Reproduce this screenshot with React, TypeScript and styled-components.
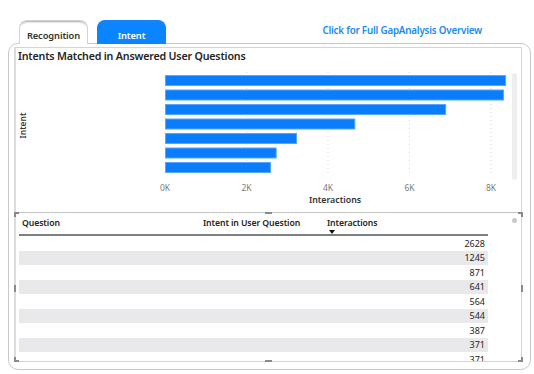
import React from "react";
import styled, { createGlobalStyle } from "styled-components";

const Global = createGlobalStyle`
  html, body { margin: 0; padding: 0; background: #fff; }
  body { font-family: "Noto Sans", "Open Sans", sans-serif; color: #252423; }
  * { box-sizing: border-box; }
`;

const Page = styled.div`
  width: 534px;
  height: 374px;
  overflow: hidden;
  display: flex;
  flex-direction: column;
`;

const TopBar = styled.div`
  height: 43px;
  display: flex;
  align-items: flex-end;
  padding-left: 19px;
  position: relative;
  z-index: 2;
`;

const Tab = styled.div<{ $active?: boolean }>`
  width: 69px;
  height: 24px;
  margin-right: 9px;
  margin-bottom: -1px;
  border-radius: 8px 8px 0 0;
  display: flex;
  align-items: flex-end;
  justify-content: center;
  padding-bottom: 2px;
  font-size: 9.3px;
  font-weight: 600;
  letter-spacing: -0.1px;
  background: ${(p) => (p.$active ? "#0a84ff" : "#fff")};
  color: ${(p) => (p.$active ? "#fff" : "#333")};
  border: 1px solid ${(p) => (p.$active ? "#0a84ff" : "#d2d2d2")};
  border-bottom: none;
  box-shadow: inset 0 3px 2px -2px ${(p) => (p.$active ? "#3a7fc8" : "#a8a8a8")};
`;

const LinkText = styled.a`
  margin-left: auto;
  margin-right: 52px;
  align-self: flex-start;
  margin-top: 24px;
  font-size: 9.8px;
  font-weight: 600;
  color: #1a8bf0;
  text-decoration: none;
  letter-spacing: -0.2px;
`;

const Card = styled.div`
  margin-left: 8px;
  width: 523px;
  height: 327px;
  border: 1px solid #c9c9c9;
  border-radius: 10px;
  padding: 3px 8px 7px 5px;
`;

const Frame = styled.div`
  height: 100%;
  border: 1px solid #d4d4d4;
  border-left: 2px solid #dcdcdc;
  display: flex;
  flex-direction: column;
`;

const ChartSection = styled.div`
  height: 162px;
  display: grid;
  grid-template-columns: 14px 125px 355px 2px 1fr;
  grid-template-rows: 22px 125px 1fr;
`;

const ChartTitle = styled.div`
  grid-column: 1 / -1;
  padding: 1px 0 0 2px;
  font-size: 10.7px;
  font-weight: 600;
  color: #252423;
  letter-spacing: -0.2px;
`;

const YAxisTitle = styled.div`
  grid-column: 1;
  grid-row: 2;
  display: flex;
  align-items: center;
  justify-content: center;
  padding-bottom: 14px;
  & > span {
    transform: rotate(-90deg);
    font-size: 8.5px;
    font-weight: 600;
    color: #333;
    white-space: nowrap;
  }
`;

const Plot = styled.svg`
  grid-column: 3;
  grid-row: 2;
  width: 355px;
  height: 125px;
  display: block;
`;

const ScrollTrack = styled.div`
  grid-column: 5;
  grid-row: 2;
  width: 5px;
  height: 107px;
  margin-top: 3px;
  border-radius: 3px;
  background: #eeeeee;
`;

const XAxisTitle = styled.div`
  grid-column: 3;
  grid-row: 3;
  text-align: center;
  padding-left: 5px;
  font-size: 8.8px;
  font-weight: 600;
  color: #333;
  margin-top: -1px;
`;

const TableVisual = styled.div`
  position: relative;
  margin-top: 2px;
  flex: 1;
  border-top: 1px solid #c4c4c4;
  padding: 2px 0 0 3px;
  overflow: visible;
`;

const TableClip = styled.div`
  width: 469px;
  height: 146px;
  overflow: hidden;
`;

const HeaderRow = styled.div`
  display: grid;
  grid-template-columns: 184px 124px 1fr;
  height: 21px;
  border-bottom: 2px solid #7e7e86;
  font-size: 8.7px;
  font-weight: 600;
  color: #252423;
  padding-top: 2px;
  letter-spacing: -0.1px;
`;

const HeadCell = styled.div<{ $first?: boolean }>`
  padding-left: ${(p) => (p.$first ? 3 : 0)}px;
  position: relative;
`;

const SortCaret = styled.span`
  position: absolute;
  left: 2px;
  top: 13px;
  width: 0;
  height: 0;
  border-left: 3px solid transparent;
  border-right: 3px solid transparent;
  border-top: 4px solid #111;
`;

const Row = styled.div<{ $alt: boolean }>`
  height: 14.5px;
  display: flex;
  align-items: center;
  justify-content: flex-end;
  padding-right: 3px;
  background: ${(p) => (p.$alt ? "#e9e9eb" : "#fff")};
  font-size: 9px;
  color: #252423;
`;

const Handle = styled.div<{ $w: number; $h: number }>`
  position: absolute;
  width: ${(p) => p.$w}px;
  height: ${(p) => p.$h}px;
  background: #8a8a8a;
`;

const Corner = styled.div`
  position: absolute;
  width: 5px;
  height: 5px;
  border-color: #8a8a8a;
  border-style: solid;
  border-width: 0;
`;

const ScrollDot = styled.div`
  position: absolute;
  right: 4px;
  top: 5px;
  width: 5px;
  height: 5px;
  border-radius: 50%;
  background: #c8c8c8;
`;

const bars = [8.37, 8.32, 6.9, 4.67, 3.24, 2.74, 2.6];
const values = ["2628", "1245", "871", "641", "564", "544", "387", "371", "371"];
const PX_PER_K = 40.75;
const X0 = 10;

export default function App() {
  return (
    <Page>
      <Global />
      <TopBar>
        <Tab>Recognition</Tab>
        <Tab $active>Intent</Tab>
        <LinkText href="#">Click for Full GapAnalysis Overview</LinkText>
      </TopBar>
      <Card>
        <Frame>
          <ChartSection>
            <ChartTitle>Intents Matched in Answered User Questions</ChartTitle>
            <YAxisTitle>
              <span>Intent</span>
            </YAxisTitle>
            <Plot viewBox="0 0 355 125">
              {[2, 4, 6, 8].map((k) => (
                <line
                  key={k}
                  x1={X0 + k * PX_PER_K}
                  x2={X0 + k * PX_PER_K}
                  y1={2}
                  y2={106}
                  stroke="#d6d6d6"
                  strokeWidth={1}
                  strokeDasharray="1 3"
                />
              ))}
              {bars.map((v, i) => (
                <rect
                  key={i}
                  x={X0 + 0.5}
                  y={5.5 + i * 14.5}
                  width={v * PX_PER_K - 1}
                  height={10}
                  fill="#0a7dfd"
                  stroke="#56a6ff"
                  strokeWidth={1}
                />
              ))}
              {[0, 2, 4, 6, 8].map((k) => (
                <text
                  key={k}
                  x={X0 + k * PX_PER_K}
                  y={121}
                  textAnchor="middle"
                  fontSize="8.5"
                  fill="#7a7a7a"
                  fontFamily="Noto Sans, sans-serif"
                >
                  {k}K
                </text>
              ))}
            </Plot>
            <ScrollTrack />
            <XAxisTitle>Interactions</XAxisTitle>
          </ChartSection>
          <TableVisual>
            <TableClip>
              <HeaderRow>
                <HeadCell $first>Question</HeadCell>
                <HeadCell>Intent in User Question</HeadCell>
                <HeadCell>
                  Interactions
                  <SortCaret />
                </HeadCell>
              </HeaderRow>
              {values.map((v, i) => (
                <Row key={i} $alt={i % 2 === 1}>
                  {v}
                </Row>
              ))}
            </TableClip>
            <ScrollDot />
            <Corner style={{ left: -2, top: -1, borderTopWidth: 2, borderLeftWidth: 2 }} />
            <Corner style={{ right: -2, top: -1, borderTopWidth: 2, borderRightWidth: 2 }} />
            <Corner style={{ left: -2, bottom: -1, borderBottomWidth: 2, borderLeftWidth: 2 }} />
            <Corner style={{ right: -2, bottom: -1, borderBottomWidth: 2, borderRightWidth: 2 }} />
            <Handle $w={7} $h={2} style={{ left: 249, top: -1 }} />
            <Handle $w={7} $h={2} style={{ left: 249, bottom: -1 }} />
            <Handle $w={2} $h={7} style={{ left: -2, top: 72 }} />
            <Handle $w={2} $h={7} style={{ right: -2, top: 72 }} />
          </TableVisual>
        </Frame>
      </Card>
    </Page>
  );
}
